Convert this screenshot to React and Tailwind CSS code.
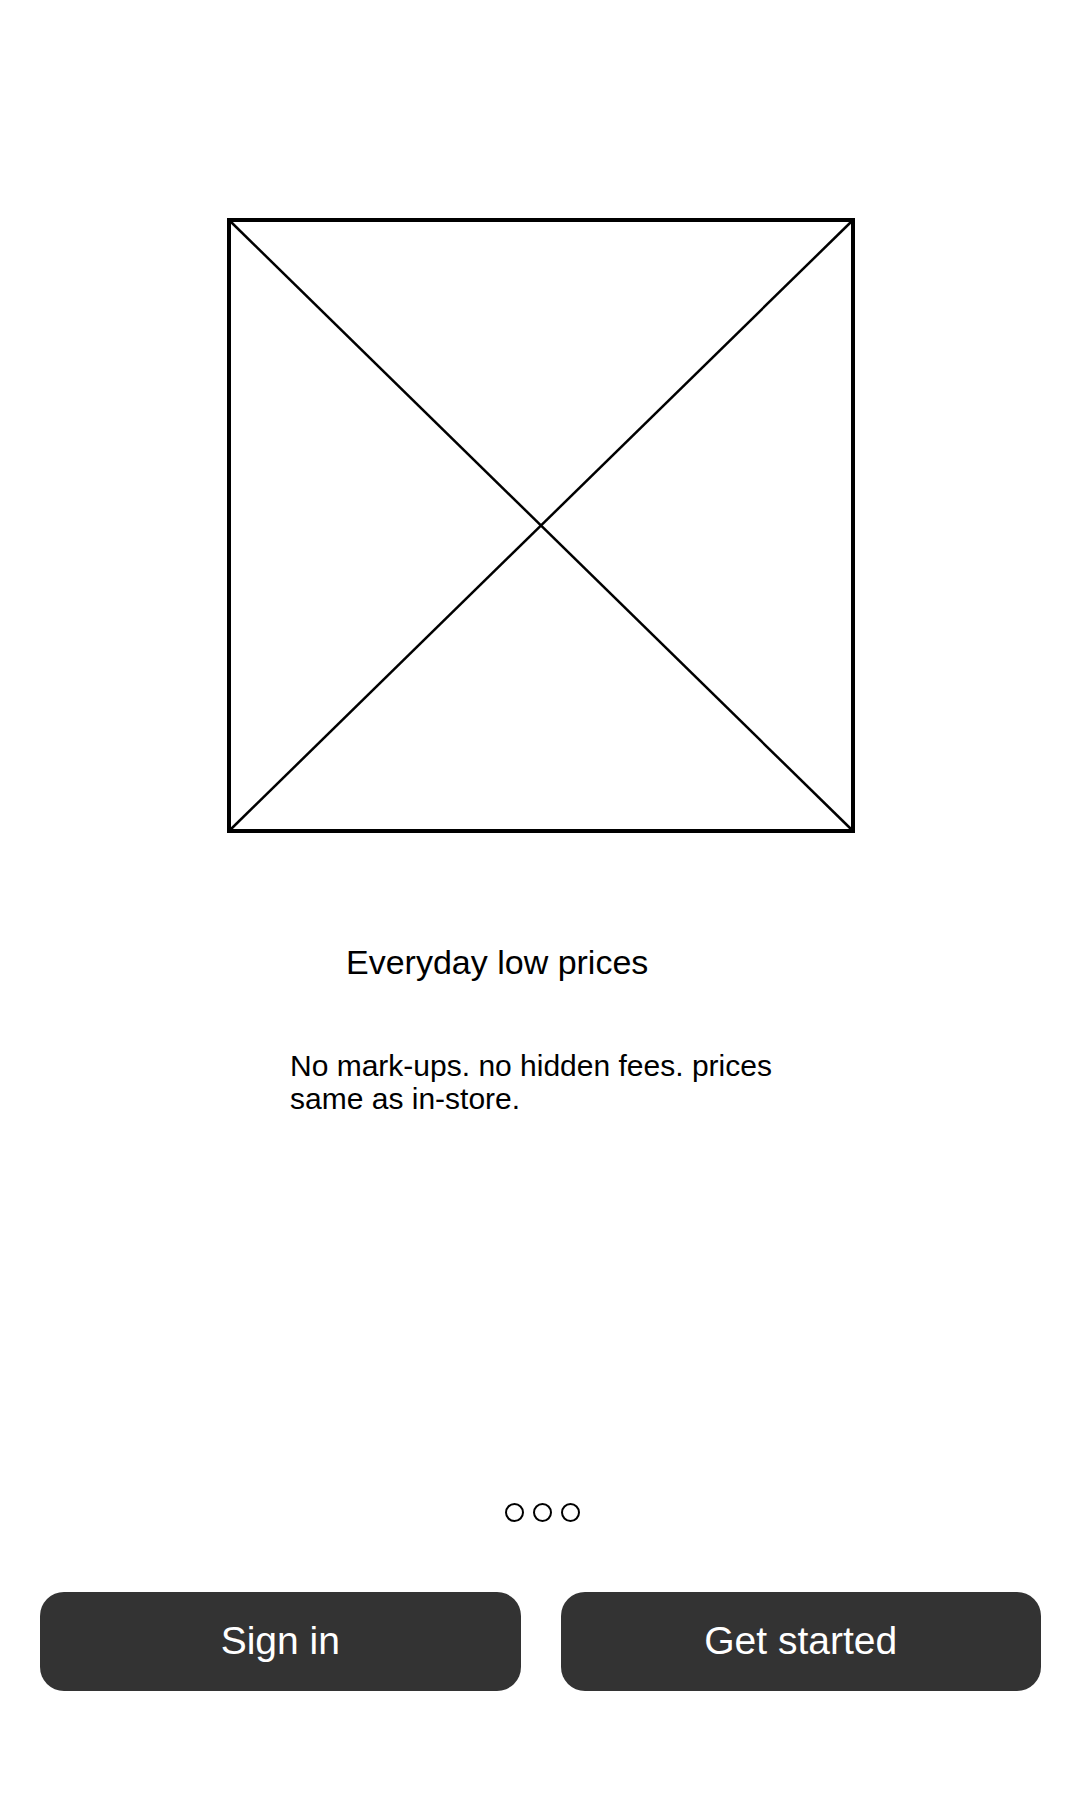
export default function App() {
  const font = { fontFamily: '"Liberation Sans", Arial, sans-serif' };
  return (
    <div className="w-[1080px] h-[1800px] bg-white flex flex-col" style={font}>
      <div className="pt-[218px] pl-[227px]">
        <svg width="628" height="615" viewBox="0 0 628 615" className="block">
          <rect x="2" y="2" width="624" height="611" fill="none" stroke="#000" strokeWidth="4" />
          <line x1="3" y1="3" x2="625" y2="612" stroke="#000" strokeWidth="2.5" />
          <line x1="625" y1="3" x2="3" y2="612" stroke="#000" strokeWidth="2.5" />
        </svg>
      </div>
      <div className="mt-[110px] pl-[346px] text-[34px] leading-[1.15] text-black">
        Everyday low prices
      </div>
      <div className="mt-[67px] ml-[290px] w-[500px] text-[30px] leading-[1.1] text-black">
        No mark-ups. no hidden fees. prices same as in-store.
      </div>
      <div className="flex-1" />
      <div className="flex justify-center gap-[9px] mb-[70px] pl-[4px]">
        <div className="w-[19px] h-[19px] rounded-full border-[2.5px] border-black" />
        <div className="w-[19px] h-[19px] rounded-full border-[2.5px] border-black" />
        <div className="w-[19px] h-[19px] rounded-full border-[2.5px] border-black" />
      </div>
      <div className="flex gap-[40px] pl-[40px] pr-[39px] mb-[109px]">
        <button className="flex-1 h-[99px] rounded-[24px] bg-[#333333] text-white text-[39px] flex items-center justify-center" style={font}>
          Sign in
        </button>
        <button className="flex-1 h-[99px] rounded-[24px] bg-[#333333] text-white text-[39px] flex items-center justify-center" style={font}>
          Get started
        </button>
      </div>
    </div>
  );
}
